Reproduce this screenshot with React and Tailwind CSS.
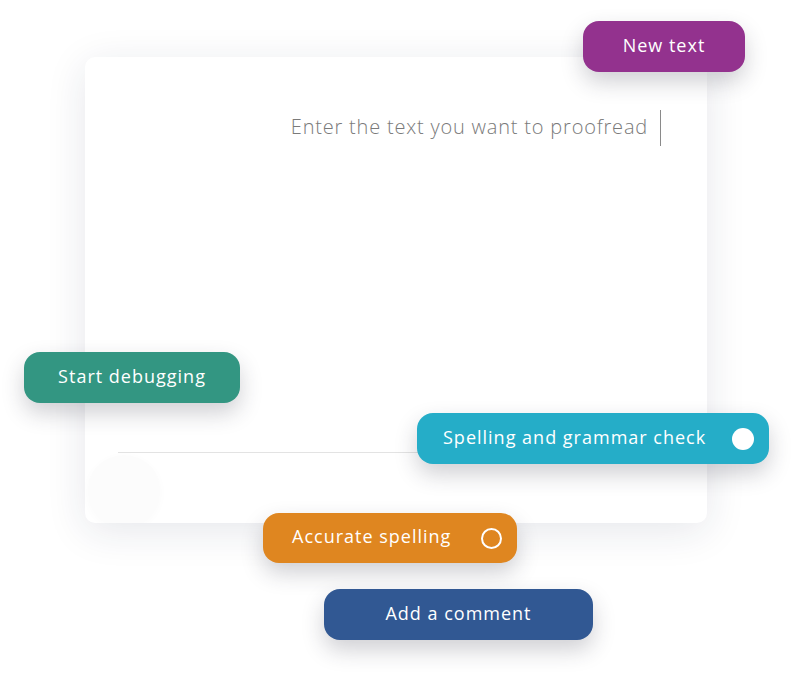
import React from 'react'

const font = { fontFamily: '"Open Sans", "Noto Sans", sans-serif' }

const Tag = ({ className, children }) => (
    <div className={'absolute flex items-center rounded-[16px] text-white text-[18px] tracking-[1px] pb-[3px] shadow-[0_10px_22px_rgba(40,40,60,0.22)] ' + className}>
        {children}
    </div>
)

export default function App() {
    return (
        <div className='relative w-[794px] h-[681px] bg-white overflow-hidden' style={font}>
            {/* proofreading card */}
            <div className='ml-[85px] mt-[57px] w-[622px] h-[466px] rounded-[10px] bg-white shadow-[0_8px_40px_rgba(30,40,70,0.11)] relative flex flex-col overflow-hidden'>
                <div className='absolute left-[3px] bottom-[-4px] w-[72px] h-[72px] rounded-full bg-[#fcfcfc] shadow-[0_2px_10px_rgba(0,0,0,0.025)]'></div>
                <div className='flex justify-end items-center pt-[53px] pr-[46px] gap-[12px]'>
                    <span className='text-[20px] font-light text-[#7a7a7a] tracking-[0.8px] pb-[2px]'>Enter the text you want to proofread</span>
                    <span className='w-px h-[36px] bg-[#8a8a8a]'></span>
                </div>
                <div className='relative mt-auto mb-[70px] ml-[33px] mr-[40px] h-px bg-[#e3e3e3]'></div>
            </div>

            <Tag className='left-[583px] top-[21px] w-[162px] h-[51px] bg-[#93328e] justify-center'>New text</Tag>
            <Tag className='left-[24px] top-[352px] w-[216px] h-[51px] bg-[#339682] justify-center'>Start debugging</Tag>
            <Tag className='left-[417px] top-[413px] w-[352px] h-[51px] bg-[#25adc8] pl-[26px] pr-[15px] justify-between'>
                <span>Spelling and grammar check</span>
                <span className='w-[22px] h-[22px] rounded-full bg-white mt-[3px]'></span>
            </Tag>
            <Tag className='left-[263px] top-[513px] w-[254px] h-[50px] bg-[#df8620] pl-[29px] pr-[15px] justify-between'>
                <span>Accurate spelling</span>
                <span className='w-[21px] h-[21px] rounded-full border-2 border-white mt-[3px]'></span>
            </Tag>
            <Tag className='left-[324px] top-[589px] w-[269px] h-[51px] bg-[#315893] justify-center'>Add a comment</Tag>
        </div>
    )
}
